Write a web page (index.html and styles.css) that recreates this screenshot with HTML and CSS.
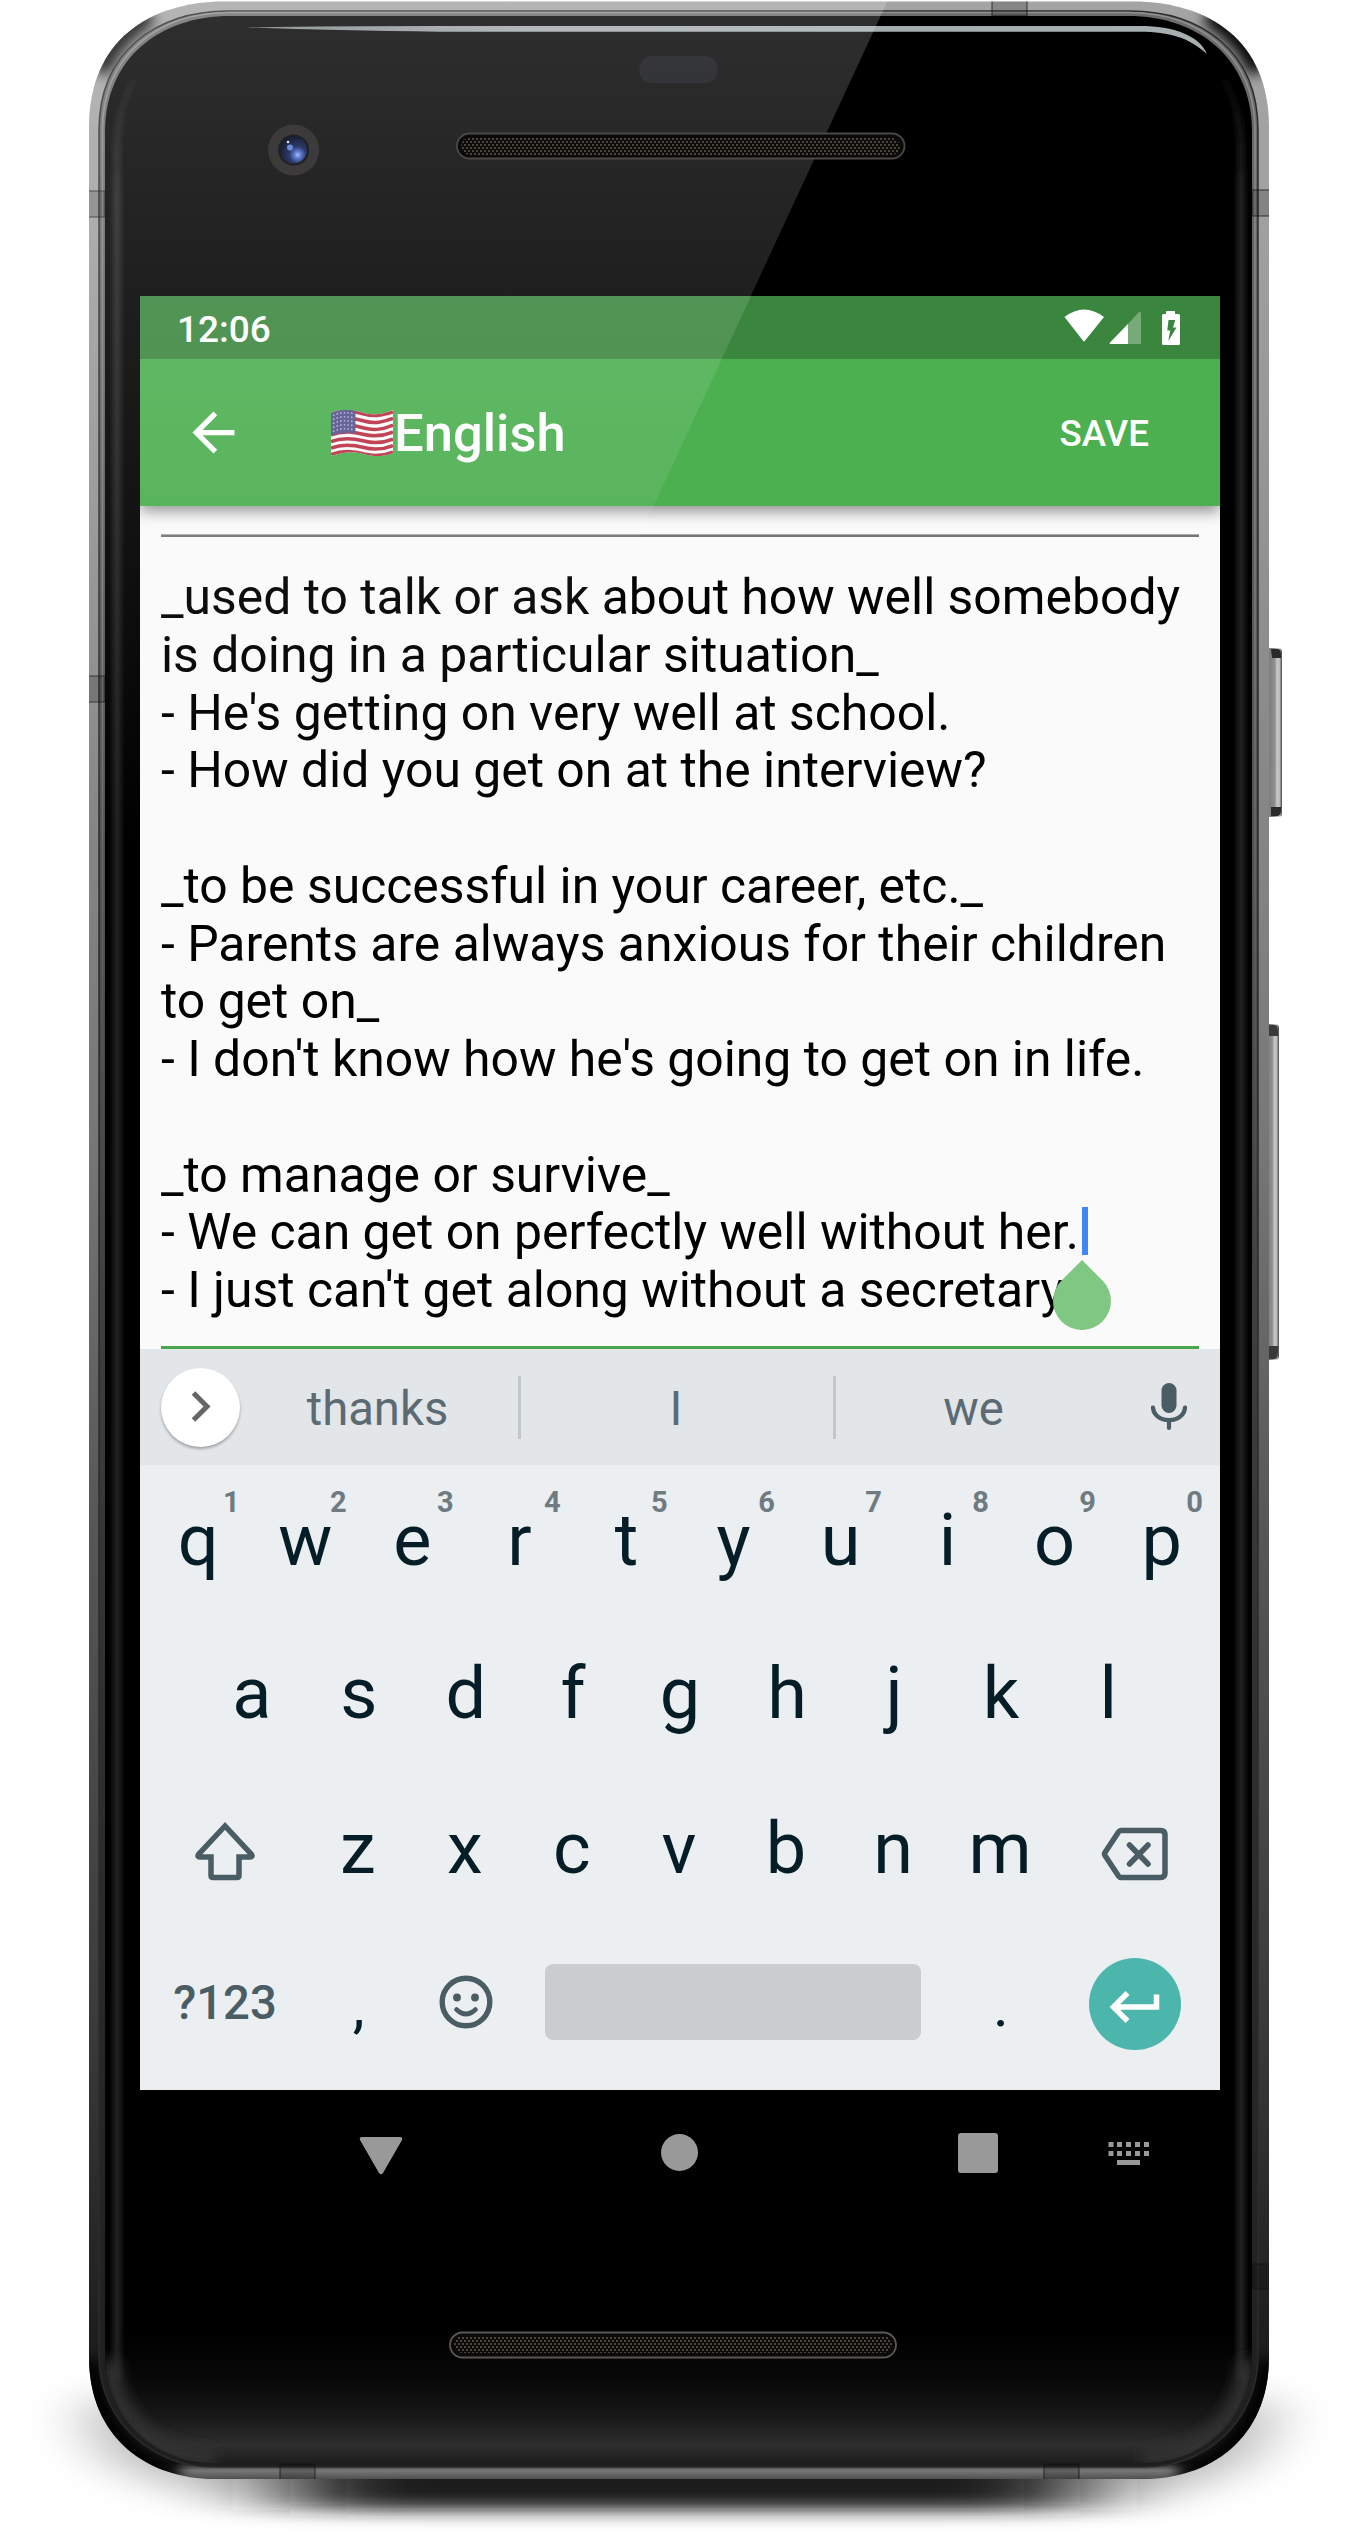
FILE: index.html
```html
<!DOCTYPE html>
<html lang="en">
<head>
<meta charset="utf-8">
<title>English</title>
<link rel="stylesheet" href="styles.css">
</head>
<body>
<div class="stage">
  <svg class="device" viewBox="0 0 1370 2534" aria-hidden="true">
    <defs>
      <linearGradient id="metal" x1="0" y1="0" x2="0" y2="1">
        <stop offset="0" stop-color="#a4a4a4"/><stop offset=".07" stop-color="#a2a2a2"/>
        <stop offset=".2" stop-color="#949494"/><stop offset=".45" stop-color="#777"/>
        <stop offset=".6" stop-color="#575757"/><stop offset=".8" stop-color="#3a3a3a"/>
        <stop offset=".93" stop-color="#1c1c1c"/><stop offset=".972" stop-color="#222"/>
        <stop offset=".975" stop-color="#777"/><stop offset=".979" stop-color="#484848"/><stop offset="1" stop-color="#444"/>
      </linearGradient>
      <linearGradient id="metalInner" x1="0" y1="0" x2="0" y2="1">
        <stop offset="0" stop-color="#6c6c6c"/><stop offset=".3" stop-color="#555"/>
        <stop offset=".7" stop-color="#2f2f2f"/><stop offset="1" stop-color="#1e1e1e"/>
      </linearGradient>
      <linearGradient id="innerEdge" x1="0" y1="0" x2="0" y2="1300" gradientUnits="userSpaceOnUse">
        <stop offset="0" stop-color="#929292"/><stop offset=".5" stop-color="#858585" stop-opacity=".7"/><stop offset="1" stop-color="#777" stop-opacity="0"/>
      </linearGradient>
      <linearGradient id="glassEdge" x1="0" y1="60" x2="0" y2="2440" gradientUnits="userSpaceOnUse">
        <stop offset="0" stop-color="#222" stop-opacity="0"/><stop offset=".06" stop-color="#242424"/><stop offset="1" stop-color="#202020"/>
      </linearGradient>
      <linearGradient id="chin" x1="0" y1="2330" x2="0" y2="2464" gradientUnits="userSpaceOnUse">
        <stop offset="0" stop-color="#000"/><stop offset=".35" stop-color="#070707"/><stop offset=".65" stop-color="#181818"/>
        <stop offset=".86" stop-color="#2e2e2e"/><stop offset="1" stop-color="#1c1c1c"/>
      </linearGradient>
      <linearGradient id="shineLine" x1="247" y1="0" x2="1207" y2="0" gradientUnits="userSpaceOnUse">
        <stop offset="0" stop-color="#7c8384"/><stop offset=".3" stop-color="#a3aaac"/><stop offset="1" stop-color="#a7afb1"/>
      </linearGradient>
      <linearGradient id="button" x1="0" y1="0" x2="1" y2="0">
        <stop offset="0" stop-color="#757575"/><stop offset=".55" stop-color="#8e8e8e"/>
        <stop offset=".68" stop-color="#c6c6c6"/><stop offset=".85" stop-color="#bbb"/><stop offset="1" stop-color="#444"/>
      </linearGradient>
      <radialGradient id="lens" cx=".65" cy=".68" r=".7">
        <stop offset="0" stop-color="#a9bdf5"/><stop offset=".2" stop-color="#5b76c9"/>
        <stop offset=".45" stop-color="#2b3a68"/><stop offset="1" stop-color="#1a1f30"/>
      </radialGradient>
      <pattern id="mesh" width="4" height="6" patternUnits="userSpaceOnUse">
        <rect width="4" height="6" fill="#0c0b09"/>
        <rect x="0" y="0" width="2" height="2" fill="#4b463c"/><rect x="2" y="3" width="2" height="2" fill="#4b463c"/>
      </pattern>
      <filter id="soft3" filterUnits="userSpaceOnUse" x="0" y="0" width="1370" height="2534"><feGaussianBlur stdDeviation="2.500"/></filter>
      <filter id="soft6" filterUnits="userSpaceOnUse" x="0" y="0" width="1370" height="2534"><feGaussianBlur stdDeviation="7"/></filter>
      <filter id="soft14" filterUnits="userSpaceOnUse" x="0" y="2200" width="1370" height="334"><feGaussianBlur stdDeviation="60 9"/></filter>
      <filter id="soft30" filterUnits="userSpaceOnUse" x="0" y="2200" width="1370" height="334"><feGaussianBlur stdDeviation="32 16"/></filter>
      <clipPath id="bodyClip"><path d="M89 127C89 40 150 1.500 225 1.500H1133C1208 1.500 1269 40 1269 127V2357C1269 2440 1208 2479 1144 2479H214C150 2479 89 2440 89 2357Z"/></clipPath>
      <clipPath id="glassClip"><path d="M105 132C105 58 160 16 230 16H1128C1198 16 1252 58 1252 132V2356C1252 2420 1200 2463 1146 2463H212C158 2463 105 2420 105 2356Z"/></clipPath>
    </defs>

    <path d="M85 2400Q85 2490 230 2490H1130Q1275 2490 1275 2400Z" fill="#000" opacity=".26" filter="url(#soft30)"/>
    <rect x="290" y="2440" width="790" height="70" fill="#1c1c1c" filter="url(#soft14)"/>

    <rect x="1266" y="648" width="16" height="169" rx="4" fill="url(#button)"/>
    <path d="M1271 649h7q3 0 3 6v3h-9zM1271 807h10v3q0 5-3 6h-7z" fill="#2a2a2a"/>
    <rect x="1264" y="1024" width="15" height="336" rx="4" fill="url(#button)"/>
    <path d="M1268 1025h7q3 0 3 6v5h-10zM1268 1346h10v6q0 6-3 7h-7z" fill="#3a3a3a"/>

    <g clip-path="url(#bodyClip)">
      <rect x="80" width="1200" height="2534" fill="url(#metal)"/>
      <g fill="none" stroke="#050505" stroke-width="22" filter="url(#soft6)">
        <path d="M100 72C108 48 126 30 150 14" stroke-width="20"/>
        <path d="M1258 72C1250 48 1232 30 1208 14" stroke-width="20"/>
        <path d="M90 2360C94 2420 130 2465 180 2474"/>
        <path d="M1268 2360C1264 2420 1228 2465 1178 2474"/>
      </g>
      <path d="M99 130C99 52 156 11 229 11H1129C1202 11 1258 52 1258 130V2356C1258 2424 1202 2467 1146 2467H212C156 2467 99 2424 99 2356Z" fill="url(#metalInner)" stroke="#2c2c2c" stroke-width="1.500"/>
      <path d="M102.500 1300V130C102.500 55 158 12.500 230 12.500H1128C1199 12.500 1255 55 1255 130V1300" fill="none" stroke="url(#innerEdge)" stroke-width="1.500"/>
      <g fill="#000" fill-opacity=".18" stroke="#111" stroke-opacity=".5" stroke-width="1.500">
        <path d="M992 0h35v16h-35zM88 191h17v26h-17zM1252 190h18v26h-18zM88 676h17v26h-17zM1252 2264h18v25h-18zM280 2464h35v16h-35zM1044 2464h35v16h-35z"/>
      </g>
    </g>
    <g clip-path="url(#glassClip)">
      <rect x="100" width="1160" height="2534" fill="#000"/>
      <rect x="100" y="2330" width="1160" height="140" fill="url(#chin)"/>
      <path d="M117 2380V150C117 72 165 28 230 22M1241 2380V150C1241 72 1193 28 1128 22" fill="none" stroke="url(#glassEdge)" stroke-width="8" filter="url(#soft3)"/>
      <path d="M110 2360C112 2412 150 2458 215 2458M1247 2360C1245 2412 1208 2458 1143 2458" fill="none" stroke="#333" stroke-width="18" filter="url(#soft6)"/>
    </g>
    <rect x="639.500" y="56" width="78" height="27" rx="12" fill="#0b0c11"/>
    <path d="M247 27.500Q330 26 440 26H1140C1174 26 1200 36 1207 54C1188 37 1170 32 1140 31.700H440Q330 30 247 27.500Z" fill="url(#shineLine)"/>
    <linearGradient id="glareFill" x1="0" y1="0" x2="0" y2="850" gradientUnits="userSpaceOnUse"><stop offset="0" stop-color="#fff" stop-opacity=".185"/><stop offset="1" stop-color="#fff" stop-opacity="0"/></linearGradient>
    <path d="M80 0H888L494 850H80Z" fill="url(#glareFill)" clip-path="url(#bodyClip)"/>
    <circle cx="293.600" cy="150" r="25.500" fill="#3d3a3b"/>
    <circle cx="293.600" cy="150" r="15.500" fill="#202125"/>
    <circle cx="293.600" cy="150" r="13.500" fill="url(#lens)"/>
    <circle cx="290" cy="147.500" r="3" fill="#6f8ada"/><circle cx="288" cy="142" r="1.300" fill="#dfe6ff"/>
    <rect x="457" y="133.500" width="447.500" height="25" rx="12.500" fill="#0a0a0a" stroke="#4a4947" stroke-width="1.800"/>
    <rect x="461" y="138" width="439" height="17" rx="8.500" fill="url(#mesh)"/>
    <rect x="450" y="2332.500" width="446" height="25" rx="12.500" fill="#0a0a0a" stroke="#5c5955" stroke-width="1.800"/>
    <rect x="454" y="2336" width="438" height="17" rx="8.500" fill="url(#mesh)"/>
  </svg>

  <main class="screen">
    <header class="status">
      <span class="clock">12:06</span>
      <svg class="status-icons" viewBox="0 0 122 40" aria-hidden="true">
        <path d="M2.500 10Q22 -5 42 10L22.700 34Q22 35 21.300 34Z" fill="#fff"/>
        <path d="M48 36.500 76.500 5.500Q79 3.500 79 7V36.500Q79 37 78 37H49Q47 37 48 36.500Z" fill="#fff" fill-opacity=".3"/>
        <path d="M66 17V37H49Q47 37 48 35.500Z" fill="#fff"/>
        <path fill-rule="evenodd" d="M104 4h9v3h3.500q1.500 0 1.500 1.500v28q0 1.500-1.500 1.500h-15Q100 38 100 36.500v-28Q100 7 101.500 7H104ZM106.500 13L105.300 23.500H108.200L106.300 34 114.500 20.500H111L113.200 13Z" fill="#fff"/>
      </svg>
    </header>
    <div class="appbar">
      <svg class="back" viewBox="0 0 24 24"><path d="M20 11H7.830l5.590-5.590L12 4l-8 8 8 8 1.410-1.410L7.830 13H20z" fill="#fff"/></svg>
      <svg class="flag" viewBox="0 0 62 46" aria-hidden="true">
        <clipPath id="wave"><path d="M0 3C12-2 23 0 33 3C44 6 52 4 62 0V43C52 47 44 47 33 44C22 41 12 42 0 46Z"/></clipPath>
        <g clip-path="url(#wave)">
          <rect width="62" height="46" fill="#fafafa"/>
          <g fill="none" stroke="#bb3145" stroke-width="3.500">
            <path d="M0 4C12-1 23 1 33 4C44 7 52 5 62 2"/><path d="M0 11C12 6 23 8 33 11C44 14 52 12 62 8.500"/><path d="M0 18C12 13 23 15 33 18C44 21 52 19 62 15"/><path d="M0 25C12 20 23 22 33 24.500C44 27 52 26 62 22"/><path d="M0 31.500C12 27 23 28.500 33 31C44 34 52 33 62 29"/><path d="M0 38C12 33.500 23 35 33 37.500C44 40.500 52 39.500 62 35.500"/><path d="M0 44.500C12 40 23 41 33 44C44 47 52 46 62 42"/>
          </g>
          <path d="M0 3C8-1 16-1 24.500.700V23.500C16 22 8 23 0 26Z" fill="#57558e"/>
          <path d="M2 5.500Q12 1 24 4M2 9.500Q12 5 24 8M2 13.500Q12 9 24 12M2 17.500Q12 13 24 16M2 21.500Q12 17 24 20" fill="none" stroke="#b9b8d4" stroke-width="1.400" stroke-dasharray="1.500 2.200"/>
        </g>
      </svg><h1 class="title">English</h1>
      <button class="save">SAVE</button>
    </div>
    <section class="editor">
      <div class="rule"></div>
      <div class="note">_used to talk or ask about how well somebody
is doing in a particular situation_
- He's getting on very well at school.
- How did you get on at the interview?

_to be successful in your career, etc._
- Parents are always anxious for their children
to get on_
- I don't know how he's going to get on in life.

_to manage or survive_
- We can get on perfectly well without her.
- I just can't get along without a secretary.</div>
      <div class="focus-line"></div>
      <span class="caret"></span>
      <svg class="handle" viewBox="0 0 58 70"><path d="M29 0 49.500 20.500A29 29 0 1 1 8.500 20.500Z" fill="#81c784"/></svg>
    </section>
    <section class="keyboard">
      <div class="suggestions">
        <span class="more"><svg viewBox="0 0 79 79"><path d="M32.500 25 46 38.500 32.500 52" fill="none" stroke="#666" stroke-width="5"/></svg></span>
        <span class="word first">thanks</span><i></i><span class="word">I</span><i></i><span class="word">we</span>
        <svg class="mic" viewBox="0 0 36 48"><rect x="10.500" y="0" width="15" height="30" rx="7.500" fill="#4a5c64"/><path d="M2 24.500C2.500 32 9 37 18 37S33.500 32 34 24.500M18 37v8" fill="none" stroke="#4a5c64" stroke-width="4.200" stroke-linecap="round"/></svg>
      </div>
      <div class="row r1">
        <b>q<sup>1</sup></b><b>w<sup>2</sup></b><b>e<sup>3</sup></b><b>r<sup>4</sup></b><b>t<sup>5</sup></b><b>y<sup>6</sup></b><b>u<sup>7</sup></b><b>i<sup>8</sup></b><b>o<sup>9</sup></b><b>p<sup>0</sup></b>
      </div>
      <div class="row r2"><b>a</b><b>s</b><b>d</b><b>f</b><b>g</b><b>h</b><b>j</b><b>k</b><b>l</b></div>
      <div class="row r3">
        <span class="wide"><svg class="shift" viewBox="0 0 62 60"><path d="M31 5 4.500 33.500Q3 36 6 36H17V54.500Q17 56.500 19 56.500H43Q45 56.500 45 54.500V36H56Q59 36 57.500 33.500Z" fill="none" stroke="#4a5c64" stroke-width="5.500"/></svg></span>
        <b>z</b><b>x</b><b>c</b><b>v</b><b>b</b><b>n</b><b>m</b>
        <span class="wide"><svg class="bksp" viewBox="0 0 68 54"><path d="M20 3.500H59.500Q64 3.500 64 8V46Q64 50.500 59.500 50.500H20Q18.500 50.500 17.500 49L4 28.500Q3 27 4 25.500L17.500 5Q18.500 3.500 20 3.500Z" fill="none" stroke="#4a5c64" stroke-width="5.500"/><path d="M28.500 18 47 37M47 18 28.500 37" stroke="#4a5c64" stroke-width="5.500" stroke-linecap="round"/></svg></span>
      </div>
      <div class="row r4">
        <span class="wide sym">?123</span><b class="punct">,</b>
        <b><svg class="smile" viewBox="0 0 54 54"><circle cx="27" cy="27" r="23.800" fill="none" stroke="#4a5c64" stroke-width="5.400"/><circle cx="18" cy="22.500" r="3.900" fill="#4a5c64"/><circle cx="36" cy="22.500" r="3.900" fill="#4a5c64"/><path d="M17.500 34.500Q27 43.500 36.500 34.500" fill="none" stroke="#4a5c64" stroke-width="4.600" stroke-linecap="round"/></svg></b>
        <span class="space"></span><b class="punct">.</b>
        <span class="wide"><svg class="enter" viewBox="0 0 92 92"><circle cx="46" cy="46" r="46" fill="#4db6ac"/><path d="M67.500 36.500V49H24M38.500 35 24.500 49 38.500 63" fill="none" stroke="#fff" stroke-width="5.500"/></svg></span>
      </div>
    </section>
    <svg class="nav" viewBox="0 0 1080 126"><g fill="#999">
      <path d="M222 47H260Q263 47 262 50L243 83Q241 85.500 239 83L220 50Q219 47 222 47Z"/>
      <circle cx="539.500" cy="62.500" r="18.500"/><rect x="818" y="43" width="40" height="40" rx="3"/>
      <path d="M968.500 52h5v5h-5zM977 52h5v5h-5zM986 52h5v5h-5zM995 52h5v5h-5zM1004 52h5v5h-5zM968.500 61h5v5h-5zM977 61h5v5h-5zM986 61h5v5h-5zM995 61h5v5h-5zM1004 61h5v5h-5zM977 70h23v5h-23z"/>
    </g></svg>
  </main>
  <svg class="reflection" viewBox="0 0 1370 2534" aria-hidden="true"><path d="M140 296H751L494 850H140Z" fill="url(#glareFill)"/></svg>
</div>
</body>
</html>
```

FILE: styles.css
```css
* { box-sizing: border-box; }
html, body { margin: 0; background: #fff; }
body { font-family: Roboto, "Liberation Sans", sans-serif; overflow: hidden; }
svg { display: block; flex: none; }

.stage { position: relative; width: 1370px; height: 2534px; padding: 296px 0 0 140px; overflow: hidden; }
.device, .reflection { position: absolute; left: 0; top: 0; width: 1370px; height: 2534px; }
.reflection { pointer-events: none; z-index: 2; }

.screen { position: relative; width: 1080px; height: 1920px; background: #000; display: flex; flex-direction: column; }

.status { height: 63px; background: #3b863e; display: flex; justify-content: space-between; align-items: center; padding: 4px 36px 0 37px; color: #fff; }
.clock { font-size: 37px; font-weight: 500; }
.status-icons { width: 122px; height: 40px; margin-top: -5px; }

.appbar { position: relative; z-index: 1; height: 147px; background: #4caf50; display: flex; align-items: center; color: #fff; padding: 0 71px 0 42px; box-shadow: 0 5px 14px rgba(0, 0, 0, .45); clip-path: inset(0 0 -40px 0); }
.back { width: 63px; height: 63px; }
.flag { width: 62px; height: 46px; margin-left: 86px; }
.title { margin: 0 auto 0 1px; font-size: 52.5px; font-weight: 500; line-height: 62px; }
.save { border: 0; padding: 2px 0 0; background: none; color: #fff; font: 500 36.75px Roboto, sans-serif; }

.editor { position: relative; height: 843px; background: #fafafa; padding: 28px 21px 0; }
.rule { height: 3px; background: #757575; border-top: 1px solid #aaa; }
.note { margin-top: 32px; height: 777px; font-size: 49.875px; line-height: 57.75px; white-space: pre; color: #000; }
.focus-line { height: 3px; background: #4aa54e; }
.caret { position: absolute; left: 942px; top: 701px; width: 6px; height: 48px; background: #4285f4; }
.handle { position: absolute; left: 913px; top: 754px; width: 58px; height: 70px; }

.keyboard { height: 741px; background: #ebeff2; display: flex; flex-direction: column; color: #051d26; }
.suggestions { height: 116px; background: #e2e6e9; display: flex; align-items: center; padding-left: 21px; font-size: 47.25px; color: #5c6b73; box-shadow: 0 -2px 5px rgba(0, 0, 0, .04); }
.more { width: 79px; height: 79px; border-radius: 50%; background: #fff; box-shadow: 0 2px 3px rgba(0, 0, 0, .3); }
.more svg { width: 79px; height: 79px; }
.word { width: 312px; padding: 3px 2px 0 0; text-align: center; }
.word.first { width: 278px; padding-right: 3px; }
.suggestions .word:nth-of-type(4) { width: 275px; padding-right: 0; }
.suggestions i { width: 3px; height: 63px; background: #c2c7ca; }
.mic { width: 36px; height: 48px; margin-left: 40px; }

.row { display: flex; height: 154.5px; line-height: 154.5px; padding: 0 4.75px; font-size: 72px; }
.row b { position: relative; width: 107.05px; font-weight: 400; text-align: center; display: flex; justify-content: center; align-items: center; }
.r1 { height: 151.7px; line-height: 151.5px; }
.r1 b { display: block; }
.row sup { position: absolute; left: 71px; top: 22px; width: 31px; font-size: 29px; line-height: 30px; font-weight: 700; color: #6f7b81; text-align: center; }
.r2 { padding-left: 58.25px; }
.r3 b { top: 1px; left: -1px; }
.wide { width: 160.5px; display: flex; justify-content: center; align-items: center; }
.shift { width: 62px; height: 60px; margin-top: 5px; }
.bksp { width: 68px; height: 54px; margin-top: 12px; }
.sym { font-size: 47.25px; font-weight: 500; color: #4a5c64; }
.smile { width: 54px; height: 54px; margin-top: -2px; }
.space { width: 376px; height: 76px; margin: 38px 26px 0 26px; border-radius: 8px; background: #c9cdd0; }
.enter { width: 92px; height: 92px; margin-top: 2px; }
.row .punct { font-size: 60px; padding-top: 6px; }
.nav { width: 1080px; height: 126px; }
```
